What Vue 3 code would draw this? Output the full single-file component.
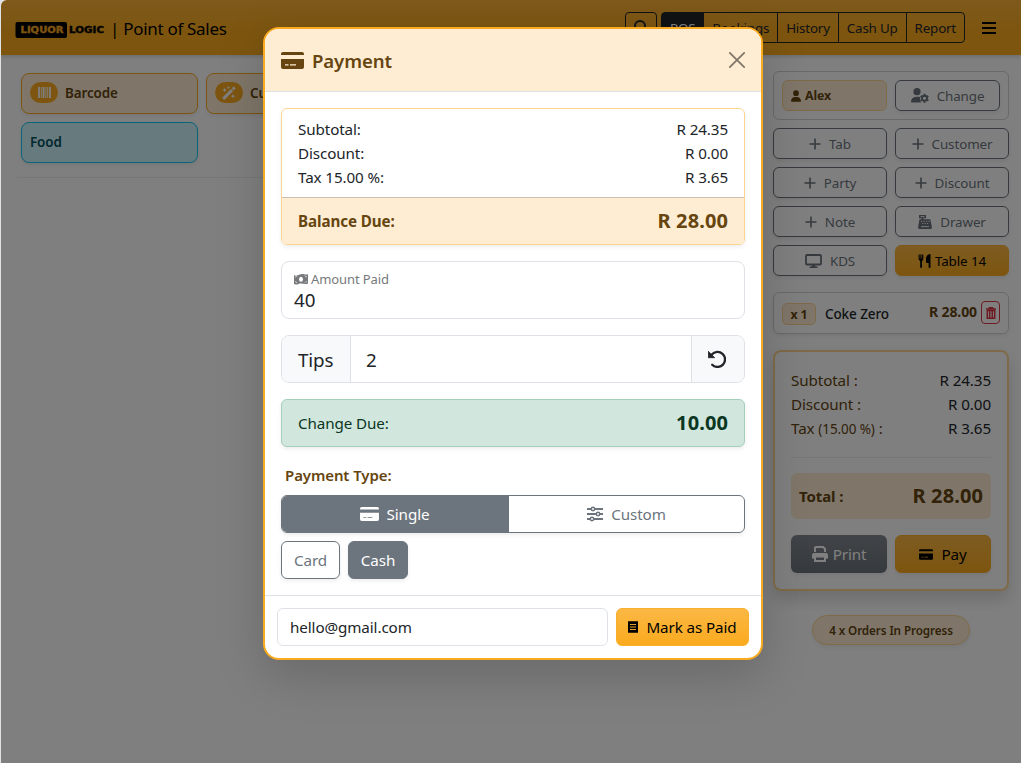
<template>
  <div class="screen">
    <div class="app">
      <header class="topbar">
        <svg class="logo" viewBox="0 0 92 16" width="92" height="16">
          <rect x="0.5" y="0" width="51.5" height="16" rx="2" fill="#000" />
          <text x="5.5" y="10.800" textLength="43" lengthAdjust="spacingAndGlyphs" fill="#fbab22" stroke="#fbab22">LIQUOR</text>
          <text x="54" y="10.800" textLength="35" lengthAdjust="spacingAndGlyphs" fill="#000" stroke="#000">LOGIC</text>
        </svg>
        <span class="title">| Point of Sales</span>
        <nav class="nav">
          <button class="nav-search">
            <svg viewBox="0 0 16 16" width="16" height="16" fill="none" stroke="currentColor" stroke-width="2">
              <circle cx="7" cy="6" r="5" />
              <path d="M10.5 10l4.5 5" />
            </svg>
          </button>
          <div class="nav-group">
            <button v-for="item in navItems" :key="item" :class="{ active: item === 'POS' }">{{ item }}</button>
          </div>
          <svg class="burger" viewBox="0 0 14 12" width="14" height="12">
            <path d="M0 1h14M0 6h14M0 11h14" stroke="#000" stroke-width="2" />
          </svg>
        </nav>
      </header>

      <div class="content">
        <section class="catalog">
          <div class="tiles">
            <div class="tile">
              <span class="tile-icon">
                <svg viewBox="0 0 14 12" width="13" height="11" fill="#fff">
                  <path d="M0 0h2v12H0zM3 0h1v12H3zM5 0h2v12H5zM8 0h1v12H8zM10 0h1v12h-1zM12 0h2v12h-2z" />
                </svg>
              </span>
              Barcode
            </div>
            <div class="tile">
              <span class="tile-icon">
                <svg viewBox="0 0 16 16" width="14" height="14" fill="#fff">
                  <path d="M.8 12.900 10.300 3.400l2.400 2.400L3.200 15.300a1 1 0 0 1-1.400 0l-1-1a1 1 0 0 1 0-1.400zM11.100 2.600l1.600-1.600a1 1 0 0 1 1.400 0l1 1a1 1 0 0 1 0 1.400l-1.600 1.600zM3 2l.8 1.700L5.500 4.500l-1.700.8L3 7l-.8-1.700L.5 4.500l1.700-.8zM7.500 0l.6 1.300 1.300.6-1.300.6-.6 1.300-.6-1.300-1.300-.6 1.300-.6zM12.500 9l.8 1.800 1.800.8-1.800.8-.8 1.800-.8-1.800-1.800-.8 1.800-.8z" />
                </svg>
              </span>
              Custom
            </div>
            <div class="tile info">Food</div>
          </div>
          <hr />
        </section>

        <aside class="sidebar">
          <div class="user-box">
            <div class="user-name">
              <svg viewBox="0 0 448 512" width="10" height="12" fill="currentColor">
                <path :d="userPath" />
              </svg>
              Alex
            </div>
            <button class="btn outline">
              <svg viewBox="0 0 18 15" width="18" height="15" fill="currentColor">
                <circle cx="6" cy="3.7" r="3.6" />
                <path d="M0 14a5.2 5.2 0 0 1 5-5.3h2.5c1 0 1.4.2 2 .5a4.8 4.8 0 0 0 .8 5.3H.6A.6.6 0 0 1 0 14z" />
                <circle cx="13.5" cy="10.3" r="2.5" fill="none" stroke="currentColor" stroke-width="1.9" />
                <path d="M13.5 5.8v1.7M13.5 13v1.8M9.6 8l1.5.9M15.9 11.7l1.5.9M9.6 12.6l1.5-.9M15.9 8.9l1.5-.9" stroke="currentColor" stroke-width="1.9" />
              </svg>
              Change
            </button>
          </div>

          <div class="actions">
            <button v-for="a in actions" :key="a.label" class="btn outline">
              <svg v-if="a.icon === 'plus'" viewBox="0 0 12 12" width="12" height="12">
                <path d="M6 .5v11M.5 6h11" stroke="currentColor" stroke-width="1.6" />
              </svg>
              <svg v-else-if="a.icon === 'register'" viewBox="0 0 14 14" width="14" height="14">
                <path d="M1 0h7v3.200H5.300v1h7l1.500 7V13a1 1 0 0 1-1 1H1.200a1 1 0 0 1-1-1v-1.800l1.300-7h2v-1H1z" fill="currentColor" />
                <path d="M2.500 1.600h4M3 6.300h1.200M5.500 6.300h1.200M8 6.300h1.200M10.400 6.300h1.200M4.200 8.500h1.200M6.600 8.500h1.200M9 8.500h1.200M3 11.600h8" stroke="#fff" stroke-width=".9" />
              </svg>
              <svg v-else viewBox="0 0 17 14" width="17" height="14">
                <rect x="1" y="1" width="15" height="9.5" rx="1" fill="none" stroke="currentColor" stroke-width="1.800" />
                <path d="M7 11h3l.5 1.600h2v1.400H4.500v-1.400h2z" fill="currentColor" />
              </svg>
              {{ a.label }}
            </button>
            <button class="btn warning table-btn">
              <svg viewBox="0 0 14 14" width="14" height="14" fill="#000">
                <path d="M.6.5h1.100v4h.6V.5h1.200v4h.6V.5h1.200v4A2.400 2.400 0 0 1 4 6.900V13a.9.9 0 0 1-1.800 0V6.900A2.400 2.400 0 0 1 .6 4.500zM12.500 0v13a.9.9 0 0 1-1.900 0V9H9a1 1 0 0 1-1-1V4.500C8 2 10 0 12.500 0z" />
              </svg>
              Table 14
            </button>
          </div>

          <div class="line-item">
            <span class="qty">x 1</span>
            <span class="name">Coke Zero</span>
            <span class="price">R 28.00</span>
            <button class="trash">
              <svg viewBox="0 0 10 12" width="10" height="12" fill="none" stroke="currentColor">
                <path d="M0 2h10M3.300 1.500V.6h3.400v.9" stroke-width="1.300" />
                <path d="M1.300 3.500v7.700h7.400V3.500zM3.700 4v6.500M6.300 4v6.500" stroke-width="1.500" />
              </svg>
            </button>
          </div>

          <div class="summary">
            <div class="row"><span class="label">Subtotal :</span><span>R 24.35</span></div>
            <div class="row"><span class="label">Discount :</span><span>R 0.00</span></div>
            <div class="row"><span class="label">Tax <small>(15.00 %)</small> :</span><span>R 3.65</span></div>
            <hr />
            <div class="total"><span>Total :</span><span class="big">R 28.00</span></div>
            <div class="summary-actions">
              <button class="btn secondary">
                <svg viewBox="0 0 16 16" width="16" height="16" fill="currentColor">
                  <path d="M2 6V2a2 2 0 0 1 2-2h7.500L14 2.500V6h-2V3.300L10.700 2H4v4zM2 7h12a2 2 0 0 1 2 2v3.500h-2V10.500H2v2H0V9a2 2 0 0 1 2-2z" />
                  <path d="M3 10.500h10V15H3z" fill="none" stroke="currentColor" stroke-width="2" />
                </svg>
                Print
              </button>
              <button class="btn warning pay">
                <svg viewBox="0 0 23 17" width="14" height="11"><path :d="cardPath" fill="#000" /></svg>
                Pay
              </button>
            </div>
          </div>

          <div class="orders">4 x Orders In Progress</div>
        </aside>
      </div>
    </div>

    <div class="backdrop">
      <div class="modal">
        <div class="modal-header">
          <svg viewBox="0 0 23 17" width="23" height="17"><path :d="cardPath" fill="#664510" /></svg>
          <h5>Payment</h5>
          <svg class="close" viewBox="0 0 16 16" width="16" height="16">
            <path d="M.8.8l14.400 14.400M15.200.8L.8 15.200" stroke="#000" stroke-width="1.700" stroke-linecap="round" />
          </svg>
        </div>

        <div class="modal-body">
          <div class="balance-card">
            <div class="lines">
              <div v-for="line in lines" :key="line.label" class="row">
                <span>{{ line.label }}</span><span>{{ line.value }}</span>
              </div>
            </div>
            <div class="balance"><span>Balance Due:</span><span class="big">R 28.00</span></div>
          </div>

          <div class="amount">
            <label>
              <svg viewBox="0 0 14 11" width="14" height="11">
                <path d="M0 1.300C3 2.900 6-.7 10 .2c1.500.3 2.800.5 4 .1v9.200c-3 1.500-6-1-9.500.4C3 10.500 1.300 10.700 0 10z" fill="currentColor" />
                <ellipse cx="7" cy="5.300" rx="2" ry="2.500" fill="#fff" />
                <path d="M1.200 3.200a2 2 0 0 0 1.600-1M11 8.600a2 2 0 0 1 1.800-1M1.200 7.700a1.600 1.600 0 0 1 1.500 1.400M11 1.500a1.700 1.700 0 0 0 1.800 1.400" stroke="#fff" stroke-width=".7" fill="none" />
              </svg>
              Amount Paid
            </label>
            <div class="value">{{ amount }}</div>
          </div>

          <div class="tips">
            <span class="addon">Tips</span>
            <span class="field">{{ tip }}</span>
            <button class="addon reset">
              <svg viewBox="0 0 18 18" width="18" height="18">
                <path d="M3.800 4.600A7.500 7.500 0 1 1 4.200 14.700" fill="none" stroke="#212529" stroke-width="2.300" stroke-linecap="round" />
                <path d="M.2 1.200v6.500h6.500z" fill="#212529" stroke="#212529" stroke-width=".8" stroke-linejoin="round" />
              </svg>
            </button>
          </div>

          <div class="change"><span>Change Due:</span><span class="big">10.00</span></div>

          <div class="type-label">Payment Type:</div>
          <div class="type-group">
            <button class="type single">
              <svg viewBox="0 0 23 17" width="19" height="14"><path :d="cardPath" fill="#fff" /></svg>
              Single
            </button>
            <button class="type custom">
              <svg viewBox="0 0 16 16" width="16" height="16" fill="#fff" stroke="currentColor" stroke-width="1.500">
                <path d="M0 3h16M0 8h16M0 13h16" stroke-width="2" />
                <circle cx="6" cy="3" r="1.700" />
                <circle cx="11" cy="8" r="1.700" />
                <circle cx="5" cy="13" r="1.700" />
              </svg>
              Custom
            </button>
          </div>
          <div class="methods">
            <button class="method">Card</button>
            <button class="method cash">Cash</button>
          </div>
        </div>

        <div class="modal-footer">
          <div class="email">{{ email }}</div>
          <button class="btn warning paid">
            <svg viewBox="0 0 10 12" width="10" height="12">
              <path d="M0 0l1 .6L2 0l1 .6L4 0l1 .6L6 0l1 .6L8 0l1 .6L10 0v12l-1-.6-1 .6-1-.6-1 .6-1-.6-1 .6-1-.6-1 .6-1-.6-1 .6z" fill="#000" />
              <path d="M2 3.500h6M2 6h6M2 8.500h6" stroke="#fbb033" stroke-width=".9" />
            </svg>
            Mark as Paid
          </button>
        </div>
      </div>
    </div>
  </div>
</template>

<script setup>
import { ref } from 'vue';

const navItems = ['POS', 'Bookings', 'History', 'Cash Up', 'Report'];

const actions = [
  { label: 'Tab', icon: 'plus' },
  { label: 'Customer', icon: 'plus' },
  { label: 'Party', icon: 'plus' },
  { label: 'Discount', icon: 'plus' },
  { label: 'Note', icon: 'plus' },
  { label: 'Drawer', icon: 'register' },
  { label: 'KDS', icon: 'monitor' },
];

const lines = [
  { label: 'Subtotal:', value: 'R 24.35' },
  { label: 'Discount:', value: 'R 0.00' },
  { label: 'Tax 15.00 %:', value: 'R 3.65' },
];

const amount = ref('40');
const tip = ref('2');
const email = ref('hello@gmail.com');

const cardPath =
  'M0 3V2a2 2 0 0 1 2-2h19a2 2 0 0 1 2 2v1zM0 7h23v8a2 2 0 0 1-2 2H2a2 2 0 0 1-2-2zM4 12.300v1.200h3.500v-1.200zM9 12.300v1.200h6v-1.200z';
const userPath =
  'M224 256A128 128 0 1 0 224 0a128 128 0 1 0 0 256zm-45.700 48C79.800 304 0 383.800 0 482.300C0 498.700 13.300 512 29.700 512H418.300c16.400 0 29.700-13.300 29.700-29.700C448 383.800 368.200 304 269.700 304H178.300z';
</script>

<style>
body {
  background: #dfe3e6;
}
</style>

<style scoped>
* {
  box-sizing: border-box;
}

.screen {
  position: relative;
  height: 763px;
  overflow: hidden;
  padding-left: 1px;
  font-family: 'Noto Sans', 'Open Sans', sans-serif;
  font-size: 15.2px;
  line-height: 24px;
  letter-spacing: -0.1px;
  color: #212529;
}

button {
  font: inherit;
  letter-spacing: inherit;
  color: inherit;
  margin: 0;
  padding: 0;
  border: 0;
  background: none;
}

svg {
  flex: none;
}

.app {
  height: 763px;
  background: #fff;
  border-radius: 6px 0 0 0;
  overflow: hidden;
}

.topbar {
  display: flex;
  align-items: center;
  height: 55px;
  padding: 0 25px 0 14px;
  background: linear-gradient(#fcb337, #faaa1e 60%);
  box-shadow: 0 2px 4px rgba(0, 0, 0, 0.15);
}

.logo {
  margin-top: 4px;
}

.logo text {
  font: bold 9px 'DejaVu Sans', sans-serif;
  letter-spacing: 0;
  stroke-width: 0.4px;
}

.title {
  margin: 2px 0 0 3px;
  font-size: 17px;
  letter-spacing: -0.3px;
  color: #000;
}

.nav {
  display: flex;
  align-items: center;
  margin-left: auto;
}

.nav-search {
  display: flex;
  align-items: center;
  justify-content: center;
  width: 32px;
  height: 31px;
  margin-right: 4px;
  border: 1px solid #212529;
  border-radius: 4px;
}

.nav-group {
  display: flex;
  height: 31px;
  border: 1px solid #212529;
  border-radius: 4px;
  font-size: 13.4px;
  letter-spacing: -0.2px;
}

.nav-group button {
  padding: 1px 8px 0;
  white-space: nowrap;
}

.nav-group button + button {
  border-left: 1px solid #212529;
}

.nav-group .active {
  background: #212529;
  color: #fff;
}

.burger {
  margin-left: 17px;
}

.content {
  display: flex;
  justify-content: space-between;
  padding: 16px 12px 0 16px;
}

.catalog {
  width: 740px;
}

.tiles {
  display: grid;
  grid-template-columns: repeat(4, 177px);
  gap: 8px;
  padding: 2px 4px 0;
}

.tiles .info {
  grid-column-start: 1;
}

.tile {
  display: flex;
  align-items: center;
  height: 41px;
  padding: 0 8px 2px;
  border: 1px solid #fbab22;
  border-radius: 8px;
  background: #feedd3;
  box-shadow: 0 2px 4px rgba(0, 0, 0, 0.075);
  font-size: 13.4px;
  font-weight: 600;
  color: #644411;
}

.tile.info {
  border-color: #0dcaf0;
  background: #cff4fc;
  color: #055160;
}

.tile-icon {
  display: flex;
  align-items: center;
  justify-content: center;
  width: 28px;
  height: 21px;
  margin-right: 7px;
  border-radius: 11px;
  background: #fbab22;
}

hr {
  margin: 14px 0 0;
  border: 0;
  border-top: 1px solid #eceeef;
}

.sidebar {
  width: 236px;
}

.user-box {
  display: grid;
  grid-template-columns: 1fr 1fr;
  gap: 8px;
  padding: 8px;
  border: 1px solid #ced4da;
  border-radius: 6px;
}

.user-name {
  display: flex;
  align-items: center;
  gap: 4px;
  height: 31px;
  padding-left: 8px;
  border: 1px solid #fdd590;
  border-radius: 6px;
  background: #feedd3;
  font-size: 12.4px;
  font-weight: 700;
  color: #644411;
}

.btn {
  display: flex;
  align-items: center;
  justify-content: center;
  gap: 8px;
  height: 31px;
  border-radius: 6px;
  font-size: 13.4px;
  white-space: nowrap;
  box-shadow: 0 2px 4px rgba(0, 0, 0, 0.075);
}

.outline {
  border: 1px solid #6c757d;
  color: #6c757d;
}

.warning {
  background: linear-gradient(#fbb844, #faaa1e);
  border: 1px solid #faaf2c;
  color: #000;
}

.secondary {
  background: linear-gradient(#828a91, #6c757d);
  color: #fff;
}

.actions {
  display: grid;
  grid-template-columns: 1fr 1fr;
  gap: 8px;
  margin-top: 8px;
}

.table-btn {
  gap: 3px;
}

.line-item {
  display: flex;
  align-items: center;
  height: 42px;
  margin-top: 16px;
  padding: 0 8px;
  border: 1px solid #ced4da;
  border-radius: 6px;
  box-shadow: 0 2px 4px rgba(0, 0, 0, 0.075);
}

.qty {
  width: 34px;
  height: 22px;
  margin-top: 2px;
  border: 1px solid #fdd590;
  border-radius: 5px;
  background: #feedd3;
  text-align: center;
  font-size: 12.4px;
  font-weight: 700;
  line-height: 21px;
  color: #644411;
}

.name {
  margin: 2px 0 0 9px;
  font-size: 13.5px;
  font-weight: 500;
}

.price {
  margin: -2px 4px 0 auto;
  font-size: 14px;
  font-weight: 700;
  color: #644411;
}

.trash {
  display: flex;
  align-items: center;
  justify-content: center;
  width: 19px;
  height: 23px;
  margin-top: -1px;
  border: 1px solid #dc3545;
  border-radius: 4px;
  color: #dc3545;
}

.summary {
  height: 241px;
  margin-top: 16px;
  padding: 16px;
  border: 2px solid #fdd590;
  border-radius: 8px;
  box-shadow: 0 8px 16px rgba(0, 0, 0, 0.15);
}

.row {
  display: flex;
  justify-content: space-between;
}

.label {
  color: #644411;
}

.summary .label small {
  font-size: 13.5px;
}

.summary hr {
  margin: 16px 0 15px;
}

.total {
  display: flex;
  align-items: center;
  justify-content: space-between;
  height: 46px;
  padding: 0 8px;
  border-radius: 6px;
  background: #feedd3;
  font-size: 15px;
  font-weight: 700;
  color: #644411;
}

.big {
  font-size: 20px;
  font-weight: 700;
  letter-spacing: 0.1px;
}

.summary-actions {
  display: grid;
  grid-template-columns: 1fr 1fr;
  gap: 8px;
  margin-top: 16px;
}

.summary-actions .btn {
  height: 38px;
  gap: 5px;
  font-size: 15.2px;
}

.summary-actions .pay {
  gap: 8px;
}

.orders {
  width: 158px;
  height: 30px;
  margin: 24px auto 0;
  border: 1px solid #fdd590;
  border-radius: 15px;
  background: #feedd3;
  box-shadow: 0 2px 4px rgba(0, 0, 0, 0.075);
  text-align: center;
  font-size: 11.700px;
  font-weight: 600;
  line-height: 29px;
  color: #644411;
}

.backdrop {
  position: absolute;
  inset: 0 0 0 1px;
  padding: 27px 0 0 262px;
  border-radius: 6px 0 0 0;
  background: rgba(0, 0, 0, 0.5);
}

.modal {
  width: 500px;
  height: 633px;
  border: 2px solid #faaa1e;
  border-radius: 16px;
  background: #fff;
  box-shadow: 0 16px 48px rgba(0, 0, 0, 0.175);
  overflow: hidden;
}

.modal-header {
  display: flex;
  align-items: center;
  height: 63px;
  padding: 0 16px;
  border-bottom: 1px solid #dee2e6;
  background: #feedd3;
}

h5 {
  margin: 1px 0 0 8px;
  font-size: 18.6px;
  font-weight: 600;
  color: #664510;
}

.close {
  margin-left: auto;
  opacity: 0.5;
}

.modal-body {
  height: 503px;
  padding: 16px;
}

.balance-card {
  height: 137px;
  border: 1px solid #fdd590;
  border-radius: 6px;
  box-shadow: 0 2px 4px rgba(0, 0, 0, 0.075);
  overflow: hidden;
}

.lines {
  height: 88px;
  padding: 8px 16px;
}

.balance {
  display: flex;
  align-items: center;
  justify-content: space-between;
  height: 47px;
  padding: 0 16px;
  border-top: 1px solid #ccc0ad;
  background: #feedd3;
  font-size: 15.2px;
  font-weight: 700;
  color: #664510;
}

.amount {
  height: 58px;
  margin-top: 16px;
  padding: 5px 12px;
  border: 1px solid #dee2e6;
  border-radius: 8px;
}

.amount label {
  display: flex;
  align-items: center;
  gap: 3px;
  font-size: 13px;
  color: #77797c;
}

.amount .value {
  margin-top: -3px;
  font-size: 18.8px;
}

.tips {
  display: flex;
  height: 48px;
  margin-top: 16px;
  border: 1px solid #dee2e6;
  border-radius: 8px;
  font-size: 18.8px;
  line-height: 48px;
  overflow: hidden;
}

.addon {
  width: 68px;
  padding-left: 16px;
  background: #f8f9fa;
}

.field {
  flex: 1;
  padding-left: 15px;
  border: 1px solid #dee2e6;
  border-width: 0 1px;
}

.reset {
  display: flex;
  align-items: center;
  width: 52px;
}

.change {
  display: flex;
  align-items: center;
  justify-content: space-between;
  height: 48px;
  margin-top: 16px;
  padding: 0 16px;
  border: 1px solid #a3cfbb;
  border-radius: 6px;
  background: #d1e7dd;
  box-shadow: 0 2px 4px rgba(0, 0, 0, 0.075);
  color: #0a3622;
}

.type-label {
  margin: 16px 0 8px 4px;
  font-size: 15px;
  font-weight: 600;
  color: #664510;
}

.type-group {
  display: flex;
  height: 38px;
  border: 1px solid #6c757d;
  border-radius: 6px;
  box-shadow: 0 2px 4px rgba(0, 0, 0, 0.075);
  overflow: hidden;
}

.type {
  display: flex;
  align-items: center;
  justify-content: center;
  gap: 8px;
  flex: 1;
  color: #6c757d;
}

.type.single {
  flex: none;
  width: 227px;
  padding-right: 2px;
  background: #6c757d;
  color: #fff;
}

.methods {
  display: flex;
  gap: 8px;
  margin-top: 8px;
}

.method {
  width: 59px;
  height: 38px;
  border: 1px solid #6c757d;
  border-radius: 6px;
  box-shadow: 0 2px 4px rgba(0, 0, 0, 0.075);
  color: #6c757d;
}

.cash {
  width: 60px;
  background: #6c757d;
  color: #fff;
}

.modal-footer {
  display: flex;
  gap: 8px;
  padding: 12px;
  border-top: 1px solid #dee2e6;
}

.email {
  flex: 1;
  height: 38px;
  padding-left: 12px;
  border: 1px solid #dee2e6;
  border-radius: 6px;
  line-height: 37px;
}

.paid {
  width: 133px;
  height: 38px;
  font-size: 15.2px;
  box-shadow: none;
}
</style>
